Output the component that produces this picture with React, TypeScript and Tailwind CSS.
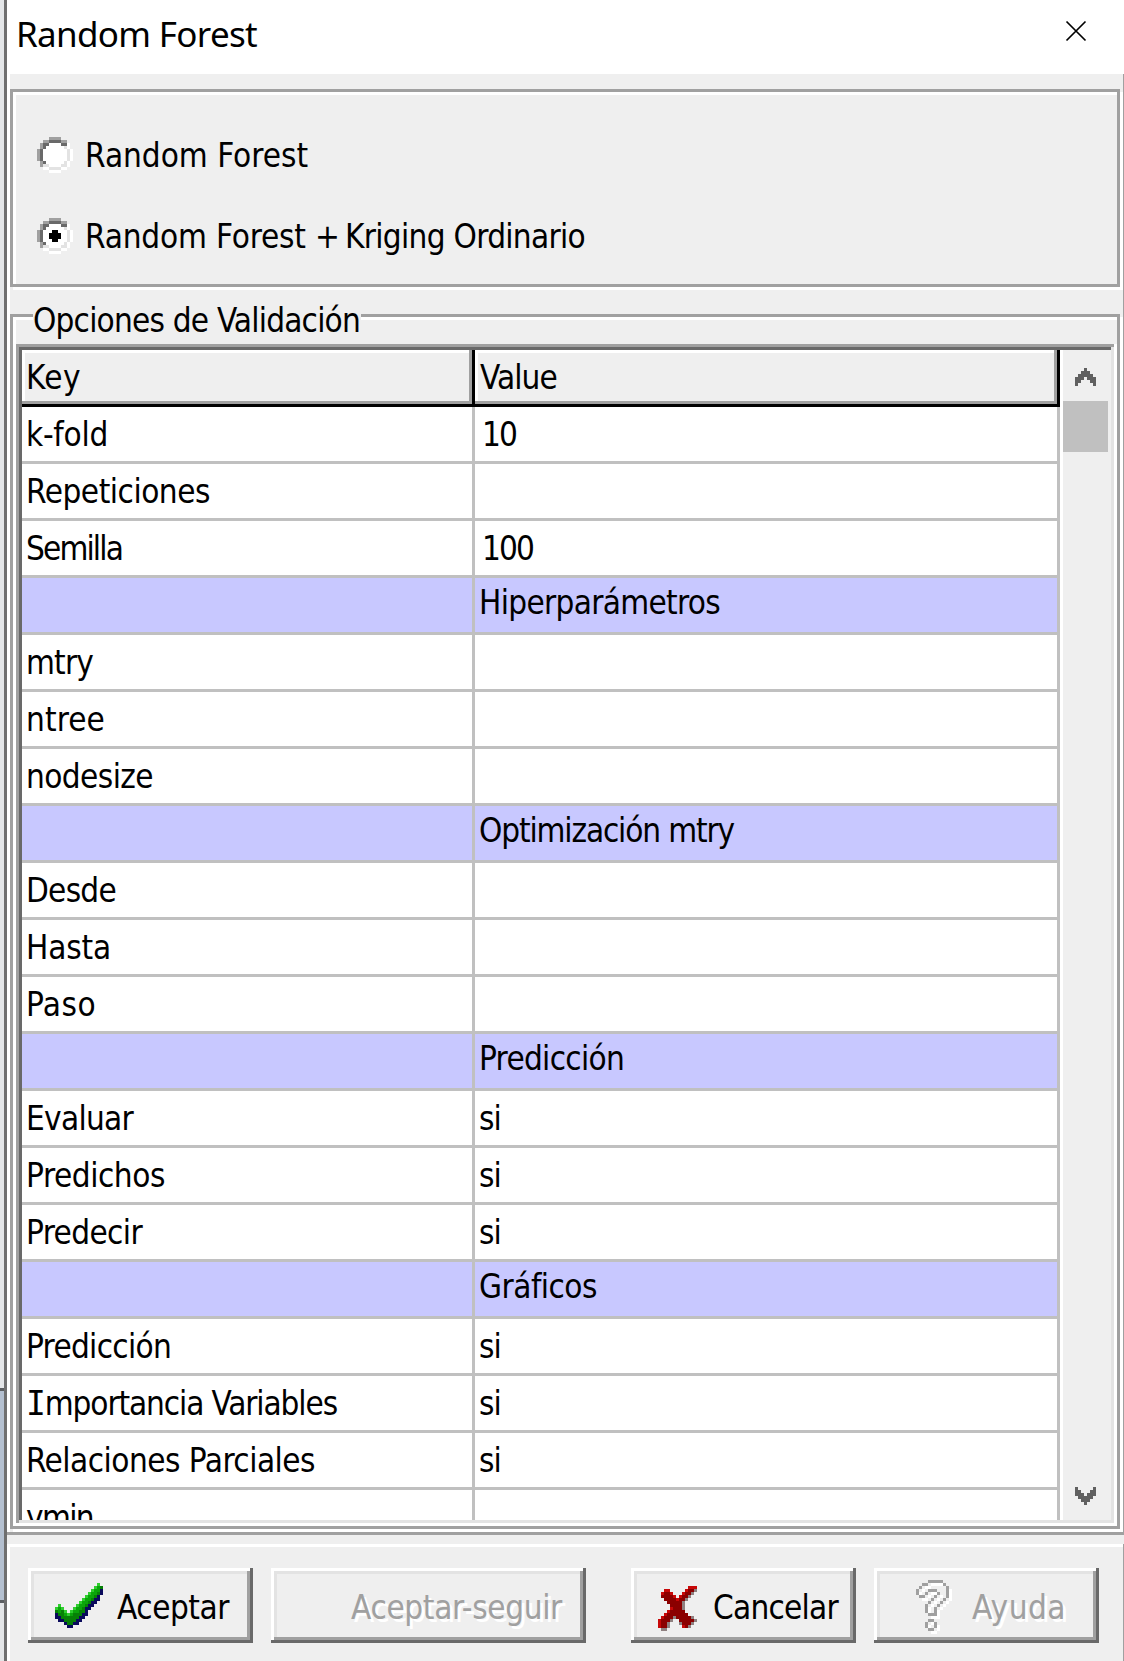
import { useLayoutEffect, useRef, useState } from "react";
import type { ReactNode } from "react";

const UI_FONT = "font-['DejaVu_Sans_Condensed','DejaVu_Sans',sans-serif] text-[33px]";

/** One line of text whose tracking is adjusted so that it fills the given width. */
function FitText({ width, className = "", children }: { width: number; className?: string; children: ReactNode }) {
  const ref = useRef<HTMLSpanElement>(null);
  const [spacing, setSpacing] = useState(0);
  useLayoutEffect(() => {
    const el = ref.current;
    if (!el) return;
    el.style.letterSpacing = "0px";
    const natural = el.getBoundingClientRect().width;
    const count = (el.textContent ?? "").length;
    const next = (width - natural) / count;
    el.style.letterSpacing = `${next}px`;
    setSpacing(next);
  }, [width]);
  return (
    <span ref={ref} className={`inline-block shrink-0 whitespace-pre ${className}`} style={{ letterSpacing: `${spacing}px` }}>
      {children}
    </span>
  );
}

type Palette = Record<string, string>;

/** Draws a low-resolution icon, three screen pixels per cell. */
function PixelIcon({ rows, palette, shadow, className = "" }: { rows: string[]; palette: Palette; shadow?: string; className?: string }) {
  const extra = shadow ? 1 : 0;
  const w = rows[0].length + extra;
  const h = rows.length + extra;
  const cells = (dx: number, fill?: string) =>
    rows.flatMap((row, y) =>
      [...row].map((c, x) =>
        palette[c] ? <rect key={`${dx}-${x}-${y}`} x={x + dx} y={y + dx} width="1" height="1" fill={fill ?? palette[c]} /> : null,
      ),
    );
  return (
    <svg width={w * 3} height={h * 3} viewBox={`0 0 ${w} ${h}`} shapeRendering="crispEdges" className={`block shrink-0 ${className}`}>
      {shadow && cells(1, shadow)}
      {cells(0)}
    </svg>
  );
}

const RADIO_TOP = ["....GGGG....", "..GGDDDDGG..", ".GDDWWWWDDW.", ".GDWWWWWWLW."];
const RADIO_BOTTOM = [".GDWWWWWWLW.", ".GLLWWWWLLW.", "..WWLLLLWW..", "....WWWW...."];
const RADIO_OFF = [...RADIO_TOP, "GDWWWWWWWWLW", "GDWWWWWWWWLW", "GDWWWWWWWWLW", "GDWWWWWWWWLW", ...RADIO_BOTTOM];
const RADIO_ON = [...RADIO_TOP, "GDWWWKKWWWLW", "GDWWKKKKWWLW", "GDWWKKKKWWLW", "GDWWWKKWWWLW", ...RADIO_BOTTOM];
const RADIO_COLORS = { G: "#a0a0a0", D: "#696969", W: "#ffffff", L: "#e3e3e3", K: "#000000" };

const CHECK = [
  "..............g.",
  ".............gmG",
  "............gmmn",
  "...........gmmGn",
  "..........gmmGn.",
  ".........gmmGnn.",
  "........gmmGnn..",
  ".g.....gmmGnn...",
  "gmg...gmmGnn....",
  "GmGg.gmmGGn.....",
  "nGGmgmGGGnn.....",
  "nnGGGGGGnn......",
  ".nnGGGGnn.......",
  "...nGGnn........",
  "....nn..........",
];
const CHECK_COLORS = { g: "#2fce2f", m: "#0aa50a", G: "#068006", n: "#0a0a5c" };

const CROSS = [
  "..........rrr",
  "..rr.....rRRg",
  ".rRRr...rRRg.",
  ".RRRRr.rRRg..",
  "..RRRRrRRg...",
  "...RRRRRg....",
  "....RRRRg....",
  "....rRRRg....",
  "...rRRRRR....",
  "..rRRRRRRR...",
  ".rRRRgRRRRRg.",
  "rRRRg..RRRRRg",
  "rRRg...gRRRg.",
  "rRRg....rRg..",
  ".gg..........",
];
const CROSS_COLORS = { r: "#c80808", R: "#8b0000", g: "#8f8080" };

const QUESTION = [
  "....GGGGG..",
  "..GG.....G.",
  ".G........G",
  "G...GGG...G",
  "G..G...G..G",
  ".GG...G...G",
  ".....G...G.",
  "....G...G..",
  "...G...G...",
  "...G..G....",
  "...G..G....",
  "....GGG....",
  "...........",
  "....GG.....",
  "...G..G....",
  "...G..G....",
  "....GG.....",
];

const CHEVRON = ["...#...", "..###..", ".#####.", "###.###", "##...##", "#.....#"];
const CHEVRON_DOWN = [...CHEVRON].reverse();

type Row = { label?: ReactNode; labelWidth?: number; value?: string; valueWidth?: number; section?: boolean; editable?: boolean };

const ROWS: Row[] = [
  { label: "k-fold", labelWidth: 82, value: "10", valueWidth: 34, editable: true },
  { label: "Repeticiones", labelWidth: 184 },
  { label: "Semilla", labelWidth: 96, value: "100", valueWidth: 51, editable: true },
  { section: true, value: "Hiperparámetros", valueWidth: 241 },
  { label: "mtry", labelWidth: 67 },
  { label: "ntree", labelWidth: 79 },
  { label: "nodesize", labelWidth: 127 },
  { section: true, value: "Optimización mtry", valueWidth: 255 },
  { label: "Desde", labelWidth: 90 },
  { label: "Hasta", labelWidth: 85 },
  { label: "Paso", labelWidth: 70 },
  { section: true, value: "Predicción", valueWidth: 145 },
  { label: "Evaluar", labelWidth: 107, value: "si", valueWidth: 22 },
  { label: "Predichos", labelWidth: 139, value: "si", valueWidth: 22 },
  { label: "Predecir", labelWidth: 116, value: "si", valueWidth: 22 },
  { section: true, value: "Gráficos", valueWidth: 118 },
  { label: "Predicción", labelWidth: 145, value: "si", valueWidth: 22 },
  {
    label: (
      <>
        <span className="font-['DejaVu_Sans_Mono',monospace] text-[33px] leading-none">I</span>mportancia Variables
      </>
    ),
    labelWidth: 311,
    value: "si",
    valueWidth: 22,
  },
  { label: "Relaciones Parciales", labelWidth: 289, value: "si", valueWidth: 22 },
  { label: "ymin", labelWidth: 67 },
];

function HeaderCell({ label, width, className }: { label: string; width: number; className: string }) {
  return (
    <div
      className={`h-[57px] shrink-0 border-r-[3px] border-b-[3px] border-black bg-[#efefef] shadow-[inset_-3px_-3px_0_0_#a0a0a0,inset_3px_3px_0_0_#fff] ${className}`}
    >
      <FitText width={width} className="leading-[56px]">
        {label}
      </FitText>
    </div>
  );
}

function GridRow({ row }: { row: Row }) {
  const cell = `h-[57px] shrink-0 overflow-hidden border-r-[3px] border-b-[3px] border-[#c0c0c0] ${row.section ? "bg-[#c8c8ff]" : "bg-white"}`;
  const line = row.section ? "leading-[49px]" : "leading-[56px]";
  return (
    <div className="flex">
      <div className={`${cell} w-[453px] pl-[4px]`}>
        {row.label && (
          <FitText width={row.labelWidth ?? 0} className={line}>
            {row.label}
          </FitText>
        )}
      </div>
      <div className={`${cell} w-[585px] ${row.editable ? "pl-[7px]" : "pl-[4px]"}`}>
        {row.value && (
          <FitText width={row.valueWidth ?? 0} className={line}>
            {row.value}
          </FitText>
        )}
      </div>
    </div>
  );
}

function PushButton({ className, disabled, children }: { className: string; disabled?: boolean; children: ReactNode }) {
  return (
    <button
      disabled={disabled}
      className={`flex h-[75px] shrink-0 items-start bg-[#efefef] text-left shadow-[inset_-3px_-3px_0_0_#696969,inset_3px_3px_0_0_#fff,inset_-6px_-6px_0_0_#a0a0a0,inset_6px_6px_0_0_#e3e3e3] ${
        disabled ? "text-[#a0a0a0] [text-shadow:3px_3px_0_#fff]" : "text-black"
      } ${className}`}
    >
      {children}
    </button>
  );
}

export default function App() {
  return (
    <div className={`flex h-[1661px] w-[1124px] overflow-hidden bg-white text-black ${UI_FONT}`}>
      {/* Sliver of the window behind the dialog */}
      <div className="flex w-1 shrink-0 flex-col bg-[#e4e6e8]">
        <div className="mt-[1388px] h-[215px] border-y-[3px] border-[#5c5f62] bg-[#b4c0d0]" />
      </div>
      <div className="w-[3px] shrink-0 bg-[#6f6f6f]" />

      <div className="flex w-[1117px] shrink-0 flex-col">
        <header className="flex h-[74px] shrink-0 justify-between bg-white pr-[37px] pl-[9px] font-['Noto_Sans',sans-serif] text-[35px]">
          <FitText width={241} className="leading-[68px]">
            Random Forest
          </FitText>
          <svg width="22" height="22" viewBox="0 0 22 22" className="mt-5 block" stroke="#000" strokeWidth="1.7">
            <path d="M1.5 1.5 20.5 20.5M20.5 1.5 1.5 20.5" />
          </svg>
        </header>

        <main className="h-[1461px] shrink-0 border-r border-b-[3px] border-[#a0a0a0] bg-[#efefef] shadow-[inset_3px_0_0_0_#fff]">
          <section className="ml-[3px] pt-[15px]">
            <div className="h-[198px] w-[1110px] border-[3px] border-[#a0a0a0] pt-[30px] pl-6 shadow-[3px_3px_0_0_#fff,inset_3px_3px_0_0_#fff]">
              <label className="flex h-[81px]">
                <PixelIcon rows={RADIO_OFF} palette={RADIO_COLORS} className="mt-[15px]" />
                <FitText width={223} className="ml-[12px] self-start leading-[68px]">
                  Random Forest
                </FitText>
              </label>
              <label className="flex h-[81px]">
                <PixelIcon rows={RADIO_ON} palette={RADIO_COLORS} className="mt-[15px]" />
                <div className="ml-[12px] flex self-start leading-[68px]">
                  <FitText width={230}>Random Forest </FitText>
                  <FitText width={30}>+</FitText>
                  <FitText width={240}>Kriging Ordinario</FitText>
                </div>
              </label>
            </div>
          </section>

          <section className="relative mt-[27px] ml-[3px] h-[1215px] w-[1110px] border-[3px] border-[#a0a0a0] pt-[27px] pl-[3px] shadow-[3px_3px_0_0_#fff,inset_3px_3px_0_0_#fff]">
            <div className="absolute -top-[17px] left-[20px] h-[42px] w-[328px] bg-[#efefef] leading-[42px]">
              <FitText width={327}>Opciones de Validación</FitText>
            </div>

            <div className="h-[1182px] w-[1101px] bg-white p-[6px] shadow-[inset_-3px_-3px_0_0_#fff,inset_3px_3px_0_0_#a0a0a0,inset_-6px_-6px_0_0_#e3e3e3,inset_6px_6px_0_0_#696969]">
              <div className="flex h-[1170px] w-[1089px] overflow-hidden">
                <div className="w-[1038px] shrink-0">
                  <div className="flex">
                    <HeaderCell label="Key" width={55} className="w-[453px] pl-[4px]" />
                    <HeaderCell label="Value" width={77} className="w-[585px] pl-[5px]" />
                  </div>
                  {ROWS.map((row, i) => (
                    <GridRow key={i} row={row} />
                  ))}
                </div>
                <div className="ml-[3px] flex w-12 shrink-0 flex-col justify-between bg-[#efefef]">
                  <div>
                    <PixelIcon rows={CHEVRON} palette={{ "#": "#606060" }} className="mt-[18px] ml-3" />
                    <div className="mt-[15px] h-[51px] w-[45px] bg-[#c0c0c0]" />
                  </div>
                  <PixelIcon rows={CHEVRON_DOWN} palette={{ "#": "#606060" }} className="mb-[15px] ml-3" />
                </div>
              </div>
            </div>
          </section>
        </main>

        <div className="h-[9px] shrink-0 bg-[#efefef]" />
        <footer className="flex h-[117px] shrink-0 border-r border-[#a0a0a0] bg-[#efefef] pt-[24px] pl-[21px] shadow-[inset_3px_3px_0_0_#fff]">
          <PushButton className="w-[225px] pl-[27px]">
            <PixelIcon rows={CHECK} palette={CHECK_COLORS} className="mt-[15px]" />
            <FitText width={112} className="ml-[14px] leading-[80px]">
              Aceptar
            </FitText>
          </PushButton>
          <PushButton disabled className="ml-[18px] w-[315px] pl-[80px]">
            <FitText width={211} className="leading-[80px]">
              Aceptar-seguir
            </FitText>
          </PushButton>
          <PushButton className="ml-[45px] w-[225px] pl-[27px]">
            <PixelIcon rows={CROSS} palette={CROSS_COLORS} className="mt-[18px]" />
            <FitText width={125} className="ml-[16px] leading-[80px]">
              Cancelar
            </FitText>
          </PushButton>
          <PushButton disabled className="ml-[18px] w-[225px] pl-[42px]">
            <PixelIcon rows={QUESTION} palette={{ G: "#a0a0a0" }} shadow="#ffffff" className="mt-[12px]" />
            <FitText width={94} className="ml-[20px] leading-[80px]">
              Ayuda
            </FitText>
          </PushButton>
        </footer>
      </div>
    </div>
  );
}
